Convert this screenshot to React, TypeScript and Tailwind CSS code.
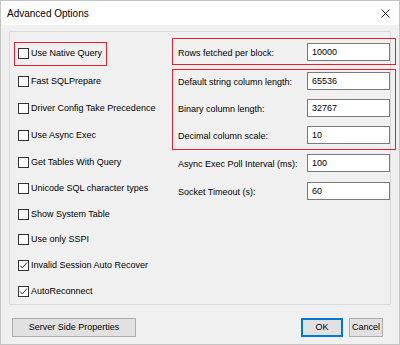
import React from "react";

const font = { fontFamily: '"Liberation Sans", Arial, sans-serif' };

function Check({ checked, label }: { checked?: boolean; label: string }) {
  return (
    <div className="flex items-center">
      <div className="w-[11px] h-[11px] border border-[#333333] bg-white flex items-center justify-center shrink-0">
        {checked && (
          <svg width="9" height="9" viewBox="0 0 9 9">
            <polyline points="1,4.5 3.3,7 8,1.5" fill="none" stroke="#333333" strokeWidth="1" />
          </svg>
        )}
      </div>
      <span className="ml-[2px] text-[9px] leading-none text-black whitespace-nowrap">{label}</span>
    </div>
  );
}

function Field({ label, value, mt }: { label: string; value: string; mt: string }) {
  return (
    <div className={`flex items-center h-[18px] ${mt}`}>
      <span className="w-[129px] text-[9px] leading-none text-black whitespace-nowrap pt-[2px]">{label}</span>
      <div className="w-[83px] h-[18px] border border-[#7a7a7a] bg-white flex items-center pl-[4px] text-[9px] leading-none text-black">
        {value}
      </div>
    </div>
  );
}

export default function App() {
  const rows: { label: string; checked?: boolean; h: string }[] = [
    { label: "Use Native Query", h: "h-[28px]" },
    { label: "Fast SQLPrepare", h: "h-[28px]" },
    { label: "Driver Config Take Precedence", h: "h-[27px]" },
    { label: "Use Async Exec", h: "h-[28px]" },
    { label: "Get Tables With Query", h: "h-[27px]" },
    { label: "Unicode SQL character types", h: "h-[26px]" },
    { label: "Show System Table", h: "h-[26px]" },
    { label: "Use only SSPI", h: "h-[26px]" },
    { label: "Invalid Session Auto Recover", checked: true, h: "h-[26px]" },
    { label: "AutoReconnect", checked: true, h: "h-[26px]" },
  ];
  return (
    <div style={font} className="relative w-[400px] h-[345px] border border-[#c4c4c4] bg-[#f0f0f0] flex flex-col overflow-hidden">
      <div className="h-[24px] bg-white flex items-center justify-between pl-[6px] pr-[9px] shrink-0">
        <span className="text-[10px] leading-none text-black pt-[1px]">Advanced Options</span>
        <svg width="9" height="9" viewBox="0 0 9 9">
          <path d="M0.5 0.5 L8.5 8.5 M8.5 0.5 L0.5 8.5" stroke="#222" strokeWidth="1" />
        </svg>
      </div>
      <div className="flex flex-col px-[8px] pt-[6px]">
        <div className="h-[274px] border border-[#dadada] flex">
          <div className="w-[168px] flex flex-col pt-[8px] pl-[8px]">
            {rows.map((r) => (
              <div key={r.label} className={`${r.h} flex items-center`}>
                <Check label={r.label} checked={r.checked} />
              </div>
            ))}
          </div>
          <div className="flex flex-col pt-[11px]">
            <Field label="Rows fetched per block:" value="10000" mt="mt-0" />
            <Field label="Default string column length:" value="65536" mt="mt-[11px]" />
            <Field label="Binary column length:" value="32767" mt="mt-[9px]" />
            <Field label="Decimal column scale:" value="10" mt="mt-[9px]" />
            <Field label="Async Exec Poll Interval (ms):" value="100" mt="mt-[10px]" />
            <Field label="Socket Timeout (s):" value="60" mt="mt-[10px]" />
          </div>
        </div>
        <div className="flex items-center mt-[13px] pl-[3px] pr-[8px]">
          <button className="w-[124px] h-[19px] border border-[#adadad] bg-[#e1e1e1] text-[9px] leading-none text-black">
            Server Side Properties
          </button>
          <div className="flex-1" />
          <button className="w-[42px] h-[19px] border border-[#0078d7] shadow-[inset_0_0_0_1px_#0078d7] bg-[#e1e1e1] text-[9px] leading-none text-black">
            OK
          </button>
          <button className="ml-[6px] w-[34px] h-[19px] border border-[#adadad] bg-[#e1e1e1] text-[9px] leading-none text-black">
            Cancel
          </button>
        </div>
      </div>
      <div className="absolute left-[13px] top-[41px] w-[93px] h-[24px] border border-[#e5202e] pointer-events-none" />
      <div className="absolute left-[171px] top-[37px] w-[224px] h-[27px] border border-[#e5202e] pointer-events-none" />
      <div className="absolute left-[171px] top-[68px] w-[224px] h-[81px] border border-[#e5202e] pointer-events-none" />
    </div>
  );
}
